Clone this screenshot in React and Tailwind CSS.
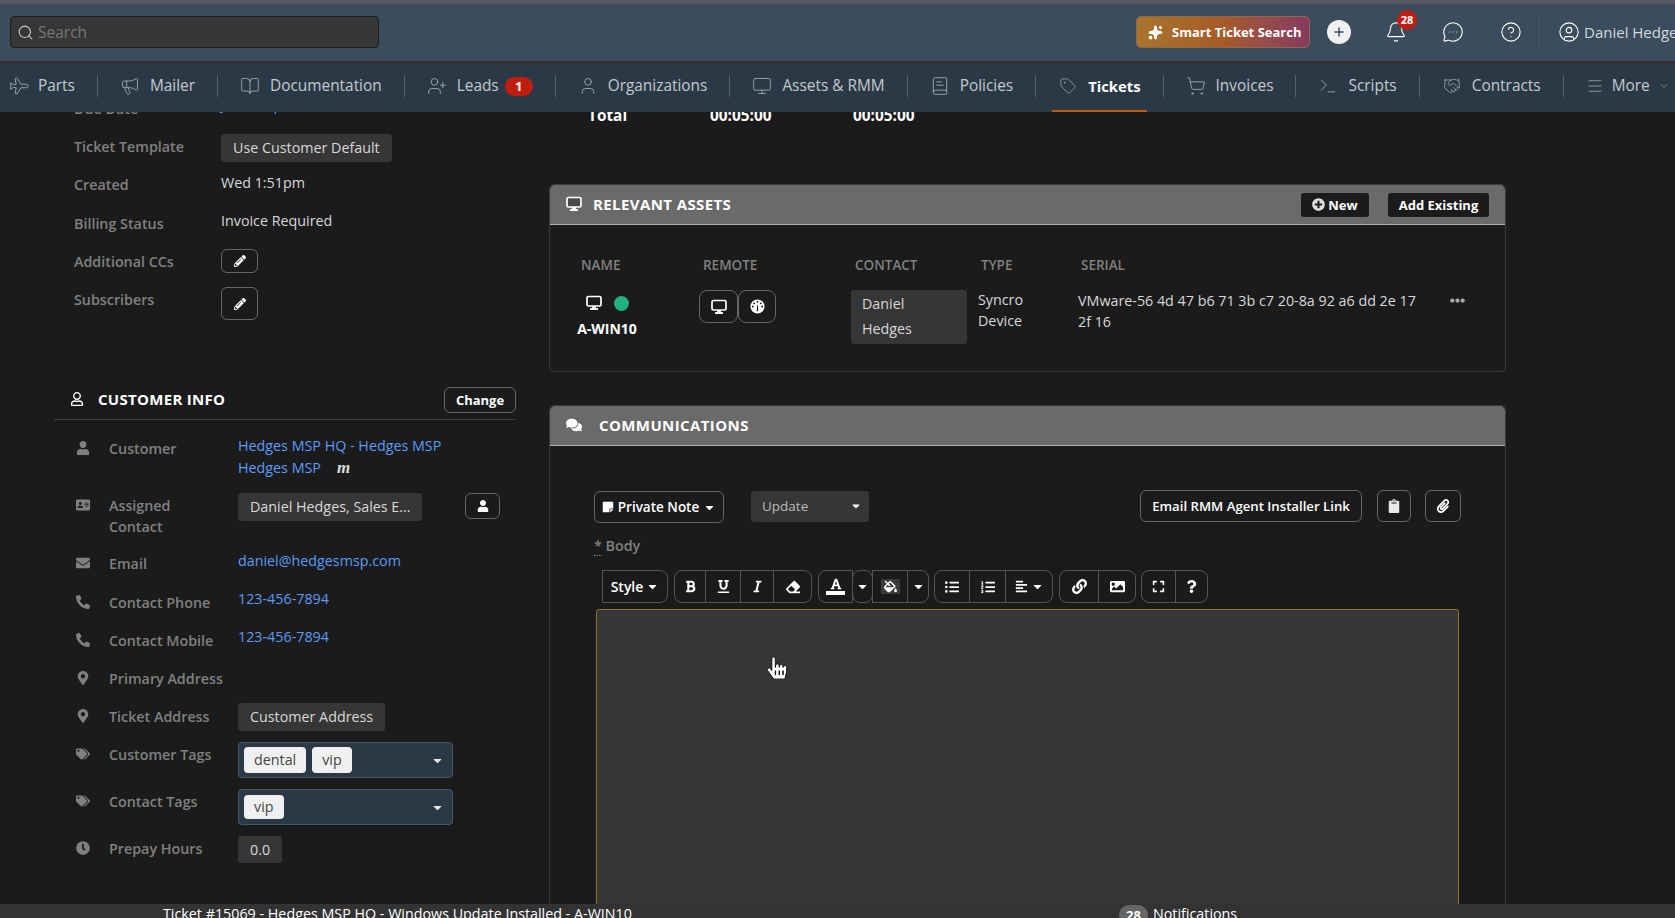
import React from 'react';
import {
  Plane, Megaphone, BookOpen, UserPlus, User, Monitor, BookText, Tag, ShoppingCart, Terminal, Handshake,
  Menu, ChevronDown, Bell, MessageCircleMore, CircleHelp, CircleUser, Search, Sparkles, Plus,
} from 'lucide-react';
import {
  FaUser, FaAddressCard, FaEnvelope, FaPhoneAlt, FaMapMarkerAlt, FaTags, FaClock, FaPencilAlt,
  FaComments, FaPlusCircle, FaBold, FaUnderline, FaItalic, FaEraser, FaFont, FaFillDrip, FaListUl, FaListOl,
  FaAlignLeft, FaLink, FaImage, FaExpand, FaQuestion, FaStickyNote, FaClipboard, FaPaperclip, FaEllipsisH,
  FaCaretDown, FaHandPointer, FaRegUser,
} from 'react-icons/fa';

const navItems = [
  { label: 'Parts', icon: Plane, iconClass: 'rotate-45' },
  { label: 'Mailer', icon: Megaphone },
  { label: 'Documentation', icon: BookOpen },
  { label: 'Leads', icon: UserPlus, badge: '1' },
  { label: 'Organizations', icon: User },
  { label: 'Assets & RMM', icon: Monitor },
  { label: 'Policies', icon: BookText },
  { label: 'Tickets', icon: Tag, iconClass: 'scale-85', active: true },
  { label: 'Invoices', icon: ShoppingCart },
  { label: 'Scripts', icon: Terminal },
  { label: 'Contracts', icon: Handshake, iconClass: 'scale-90' },
];

// solid monitor, the lucide one is too thin for the panel headers
const DesktopIcon = ({ size = 16, screen = 'none' }) => (
  <svg width={size} height={size} viewBox="0 0 16 16" className="shrink-0">
    <rect x="1" y="1.5" width="14" height="9.5" rx="1.5" fill={screen} stroke="white" strokeWidth="1.7" />
    <rect x="6.2" y="11" width="3.6" height="2.5" fill="white" />
    <rect x="4" y="13" width="8" height="2" rx="0.6" fill="white" />
  </svg>
);

const DialIcon = () => (
  <svg width="15" height="15" viewBox="0 0 16 16">
    <circle cx="8" cy="8" r="7.5" fill="white" />
    <g fill="#1b1b1b">
      <circle cx="8" cy="3" r="1" />
      <circle cx="4.4" cy="4.6" r="1" />
      <circle cx="11.6" cy="4.6" r="1" />
      <circle cx="3" cy="8" r="1" />
      <circle cx="13" cy="8" r="1" />
    </g>
    <path d="M7.2 13l.3-6h1l.3 6z" fill="#1b1b1b" />
  </svg>
);

const NavItem = ({ item }) => {
  const Icon = item.icon;
  return (
    <div className="relative flex h-full shrink-0 items-center pb-[4px]">
      <div className={`flex items-center gap-[10px] px-[22px] ${item.active ? 'text-[14.8px] font-bold text-white' : 'text-[#c4c9ce]'}`}>
        <Icon size={20} strokeWidth={1} className={`text-[#a9b0b7] ${item.iconClass || ''}`} />
        <span>{item.label}</span>
        {item.badge && (
          <span className="-ml-[4px] flex h-[19px] w-[28px] items-center justify-center rounded-full bg-[#bf1d10] text-[13px] font-bold text-white">
            {item.badge}
          </span>
        )}
      </div>
      <span className="h-[22px] w-px bg-[#55616d]" />
      {item.active && <span className="absolute bottom-0 left-[16px] h-[2px] w-[95px] bg-[#c2570c]" />}
    </div>
  );
};

const TopBar = () => (
  <header className="flex h-[57px] shrink-0 items-center bg-[#3b4d5c] pb-px pl-[10px]">
    <div className="flex h-[32px] w-[369px] shrink-0 items-center gap-[4px] rounded-[4px] border border-[#1f1f1f] bg-[#363636] pl-[6px] text-[15.5px] text-[#777]">
      <Search size={17} strokeWidth={1.5} className="text-[#c8c8c8]" />
      Search
    </div>
    <div className="ml-[757px] flex h-[32px] w-[174px] shrink-0 items-center gap-[9px] rounded-[5px] border border-[#8d6a4a] bg-gradient-to-r from-[#a8752d] via-[#a65b27] to-[#873a60] pl-[11px] text-[13px] font-bold text-white">
      <Sparkles size={15} fill="white" />
      Smart Ticket Search
    </div>
    <span className="ml-[17px] flex h-[24px] w-[24px] shrink-0 items-center justify-center rounded-full bg-[#f0f0f0]">
      <Plus size={14} strokeWidth={2.5} className="text-[#3b4d5c]" />
    </span>
    <div className="relative ml-[34px] shrink-0">
      <Bell size={22} strokeWidth={1.2} className="text-white" />
      <span className="absolute -right-[10px] -top-[11px] flex h-[20px] w-[20px] items-center justify-center rounded-full bg-[#bf1d10] text-[11px] font-bold text-white">
        28
      </span>
    </div>
    <MessageCircleMore size={22} strokeWidth={1.2} className="ml-[35px] shrink-0 text-white" />
    <CircleHelp size={22} strokeWidth={1.2} className="ml-[36px] shrink-0 text-white" />
    <span className="ml-[17px] h-[32px] w-px shrink-0 bg-[#46586a]" />
    <CircleUser size={22} strokeWidth={1.2} className="ml-[18px] shrink-0 text-white" />
    <span className="ml-[4px] whitespace-nowrap text-[15px] text-[#d4d8dc]">Daniel Hedges</span>
  </header>
);

const NavBar = () => (
  <nav className="h-[51px] shrink-0 overflow-hidden border-t-[3px] border-[#333] bg-[#2b3947] text-[15.4px]">
    <div className="-ml-[14px] flex h-full items-center">
      {navItems.map((item) => (
        <NavItem key={item.label} item={item} />
      ))}
      <div className="flex items-center gap-[8px] pb-[4px] pl-[22px] text-[#c4c9ce]">
        <Menu size={18} strokeWidth={1} className="text-[#a9b0b7]" />
        <span>More</span>
        <ChevronDown size={12} strokeWidth={1} />
      </div>
    </div>
  </nav>
);

const OutlineBtn = ({ className, children }) => (
  <span className={`flex items-center justify-center rounded-[6px] border border-[#666] text-white ${className}`}>
    {children}
  </span>
);

const TicketRow = ({ label, rowClass, valueClass, children }) => (
  <div className={`flex ${rowClass}`}>
    <span className="w-[147px] shrink-0 pt-[9px] font-semibold text-[#808080]">{label}</span>
    <div className={valueClass}>{children}</div>
  </div>
);

const GreyBox = ({ className, children }) => (
  <span className={`flex items-center rounded-[3px] bg-[#363636] text-[#d8d8d8] ${className}`}>{children}</span>
);

const TicketDetails = () => (
  <div className="-mt-[22px] pl-[74px]">
    <TicketRow label="Due Date" rowClass="h-[38px]" valueClass="pt-[5px] text-[#5a9cf5]">Jan 20 1pm</TicketRow>
    <TicketRow label="Ticket Template" rowClass="h-[38px]" valueClass="pt-[6px]">
      <GreyBox className="h-[28px] w-[171px] pl-[12px]">Use Customer Default</GreyBox>
    </TicketRow>
    <TicketRow label="Created" rowClass="h-[39px]" valueClass="pt-[7px] text-[#d8d8d8]">Wed 1:51pm</TicketRow>
    <TicketRow label="Billing Status" rowClass="h-[38px]" valueClass="pt-[6px] text-[#d8d8d8]">Invoice Required</TicketRow>
    <TicketRow label="Additional CCs" rowClass="h-[38px]" valueClass="pt-[6px]">
      <OutlineBtn className="h-[24px] w-[37px]"><FaPencilAlt size={12} /></OutlineBtn>
    </TicketRow>
    <TicketRow label="Subscribers" rowClass="h-[39px]" valueClass="pt-[6px]">
      <OutlineBtn className="h-[33px] w-[37px]"><FaPencilAlt size={12} /></OutlineBtn>
    </TicketRow>
  </div>
);

const InfoRow = ({ icon: Icon, label, rowClass, valueClass = 'pt-[3px]', children }) => (
  <div className={`flex ${rowClass}`}>
    <span className="flex w-[33px] shrink-0 justify-center pr-[19px] pt-[8px] text-[#808080]">
      <Icon size={14} className="shrink-0" />
    </span>
    <span className="w-[129px] shrink-0 pr-[12px] pt-[5px] font-semibold leading-[21px] text-[#808080]">{label}</span>
    <div className={valueClass}>{children}</div>
  </div>
);

const TagSelect = ({ tags, chipClass }) => (
  <div className="flex h-[36px] w-[215px] items-center justify-between rounded-[4px] border border-[#44586b] bg-[#2b3947] pl-[5px] pr-[8px]">
    <div className="flex gap-[6px]">
      {tags.map((t) => (
        <span key={t} className={`rounded-[4px] bg-[#f0f0f0] px-[10px] text-[#444] ${chipClass}`}>{t}</span>
      ))}
    </div>
    <FaCaretDown size={13} className="text-[#e8e8e8]" />
  </div>
);

const CustomerInfo = () => (
  <section className="ml-[54px] mt-[67px] w-[462px]">
    <div className="flex h-[33px] items-start justify-between border-b border-[#3d3d3d] pl-[16px]">
      <div className="flex items-center gap-[14px] pt-[2px] text-[15px] font-bold tracking-[0.3px] text-white">
        <FaRegUser size={14} />
        CUSTOMER INFO
      </div>
      <OutlineBtn className="h-[26px] w-[72px] rounded-[3px] text-[13px] font-bold">Change</OutlineBtn>
    </div>
    <div className="mt-[13px] pl-[22px]">
      <InfoRow icon={FaUser} label="Customer" rowClass="h-[57px]" valueClass="pt-[2px] leading-[22px] text-[#5a9cf5]">
        <div>Hedges MSP HQ - Hedges MSP</div>
        <div className="flex items-center gap-[16px]">
          Hedges MSP
          <span className="font-['Liberation_Serif',serif] text-[17px] font-bold italic text-[#ddd]">m</span>
        </div>
      </InfoRow>
      <InfoRow icon={FaAddressCard} label="Assigned Contact" rowClass="h-[58px]">
        <div className="flex items-start">
          <GreyBox className="h-[28px] w-[184px] pl-[12px]">Daniel Hedges, Sales E...</GreyBox>
          <OutlineBtn className="ml-[43px] h-[26px] w-[35px]"><FaUser size={12} /></OutlineBtn>
        </div>
      </InfoRow>
      <InfoRow icon={FaEnvelope} label="Email" rowClass="h-[39px]" valueClass="pt-[3px] text-[#5a9cf5]">daniel@hedgesmsp.com</InfoRow>
      <InfoRow icon={FaPhoneAlt} label="Contact Phone" rowClass="h-[38px]" valueClass="pt-[2px] text-[#5a9cf5]">123-456-7894</InfoRow>
      <InfoRow icon={FaPhoneAlt} label="Contact Mobile" rowClass="h-[38px]" valueClass="pt-[2px] text-[#5a9cf5]">123-456-7894</InfoRow>
      <InfoRow icon={FaMapMarkerAlt} label="Primary Address" rowClass="h-[38px]" />
      <InfoRow icon={FaMapMarkerAlt} label="Ticket Address" rowClass="h-[38px]" valueClass="pt-[2px]">
        <GreyBox className="h-[28px] w-[147px] pl-[12px]">Customer Address</GreyBox>
      </InfoRow>
      <InfoRow icon={FaTags} label="Customer Tags" rowClass="h-[47px]">
        <TagSelect tags={['dental', 'vip']} chipClass="py-[3px]" />
      </InfoRow>
      <InfoRow icon={FaTags} label="Contact Tags" rowClass="h-[47px]">
        <TagSelect tags={['vip']} chipClass="py-[2px]" />
      </InfoRow>
      <InfoRow icon={FaClock} label="Prepay Hours" rowClass="h-[47px]">
        <GreyBox className="h-[27px] w-[44px] pl-[12px]">0.0</GreyBox>
      </InfoRow>
    </div>
  </section>
);

const PanelHeader = ({ icon, iconGap, title, children }) => (
  <div className="flex h-[40px] shrink-0 items-center justify-between rounded-t-[5px] border-b border-[#b0b0b0] bg-[#6a6a6a] pl-[16px] pr-[16px]">
    <div className={`flex items-center pb-px text-[15px] font-bold tracking-[0.4px] text-white ${iconGap}`}>
      {icon}
      {title}
    </div>
    {children}
  </div>
);

const AssetsPanel = () => (
  <section className="mt-[58px] h-[188px] shrink-0 rounded-[5px] border border-[#3a3a3a]">
    <PanelHeader icon={<DesktopIcon screen="#4a4a4a" />} iconGap="gap-[11px]" title="RELEVANT ASSETS">
      <div className="flex gap-[19px] text-[13px] font-bold text-white">
        <span className="flex h-[24px] w-[68px] items-center justify-center gap-[3px] rounded-[3px] bg-[#1b1b1b]">
          <FaPlusCircle size={13} className="text-[#ddd]" />New
        </span>
        <span className="flex h-[24px] w-[101px] items-center justify-center rounded-[3px] bg-[#1b1b1b]">Add Existing</span>
      </div>
    </PanelHeader>
    <div className="grid grid-cols-[122px_152px_126px_100px_373px_auto] pl-[27px] pt-[30px]">
      {['NAME', 'REMOTE', 'CONTACT', 'TYPE', 'SERIAL', ''].map((h) => (
        <span key={h} className="h-[35px] pl-[4px] text-[13.5px] font-semibold text-[#808080]">{h}</span>
      ))}
      <div className="flex w-[60px] flex-col items-center">
        <div className="flex h-[26px] items-center gap-[12px] text-white">
          <DesktopIcon />
          <span className="h-[15px] w-[15px] rounded-full bg-[#21b07f]" />
        </div>
        <span className="mt-[3px] whitespace-nowrap text-[14px] font-bold text-white">A-WIN10</span>
      </div>
      <div className="flex items-start">
        <OutlineBtn className="h-[33px] w-[39px] rounded-[8px]"><DesktopIcon /></OutlineBtn>
        <OutlineBtn className="h-[33px] w-[38px] rounded-[8px]"><DialIcon /></OutlineBtn>
      </div>
      <div className="flex h-[54px] w-[116px] flex-col justify-center gap-[5px] rounded-[3px] bg-[#363636] pb-[2px] pl-[11px] text-[#d8d8d8]">
        <span>Daniel</span>
        <span>Hedges</span>
      </div>
      <div className="-mt-px pl-px pr-[30px] leading-[21px] text-[#d8d8d8]">Syncro Device</div>
      <div className="pl-px pr-[20px] leading-[21px] text-[#d8d8d8]">VMware-56 4d 47 b6 71 3b c7 20-8a 92 a6 dd 2e 17 2f 16</div>
      <div className="pt-[3px] text-[#aaa]"><FaEllipsisH size={15} /></div>
    </div>
  </section>
);

const toolShape = {
  both: 'rounded-[8px]',
  left: 'rounded-l-[8px]',
  right: 'rounded-r-[8px]',
  none: '',
};

const ToolGroup = ({ shape = 'both', className = '', items }) => (
  <div className={`flex h-[33px] divide-x divide-[#555] border border-[#555] ${toolShape[shape]} ${className}`}>
    {items.map(([width, content], i) => (
      <span key={i} className={`flex h-full items-center justify-center gap-[3px] text-white ${width}`}>{content}</span>
    ))}
  </div>
);

const caret = <FaCaretDown size={13} />;

const EditorToolbar = () => (
  <div className="ml-[8px] mt-[14px] flex">
    <ToolGroup shape="right" items={[['w-[64px]', <span className="flex items-center gap-[3px] text-[14px] font-semibold">Style{caret}</span>]]} />
    <ToolGroup className="ml-[6px]" items={[
      ['w-[31px]', <FaBold size={13} />], ['w-[35px]', <FaUnderline size={13} />],
      ['w-[33px]', <FaItalic size={13} />], ['w-[37px]', <FaEraser size={14} />],
    ]} />
    <ToolGroup shape="left" className="ml-[6px]" items={[[
      'w-[33px]',
      <span className="flex flex-col items-center gap-[1px]"><FaFont size={12} /><span className="h-[4px] w-[19px] bg-white" /></span>,
    ]]} />
    <ToolGroup className="-ml-px" items={[['w-[19px]', caret]]} />
    <ToolGroup shape="none" className="-ml-px" items={[[
      'w-[34px]',
      <span className="flex h-[15px] w-[19px] items-center justify-center bg-[#3a3a3a]"><FaFillDrip size={13} /></span>,
    ]]} />
    <ToolGroup shape="right" className="-ml-px" items={[['w-[20px]', caret]]} />
    <ToolGroup className="ml-[5px]" items={[
      ['w-[35px]', <FaListUl size={14} />], ['w-[36px]', <FaListOl size={14} />],
      ['w-[46px]', <>{<FaAlignLeft size={13} />}{caret}</>],
    ]} />
    <ToolGroup className="ml-[6px]" items={[['w-[39px]', <FaLink size={15} />], ['w-[36px]', <FaImage size={15} />]]} />
    <ToolGroup className="ml-[5px]" items={[['w-[34px]', <FaExpand size={13} />], ['w-[31px]', <FaQuestion size={13} />]]} />
  </div>
);

const CommunicationsPanel = () => (
  <section className="mt-[33px] min-h-0 flex-1 rounded-t-[5px] border border-b-0 border-[#3a3a3a]">
    <PanelHeader icon={<FaComments size={16} />} iconGap="gap-[17px]" title="COMMUNICATIONS" />
    <div className="pl-[44px] pt-[45px]">
      <div className="flex w-[867px] items-start">
        <OutlineBtn className="h-[32px] w-[130px] gap-[4px] text-[13.5px] font-semibold">
          <FaStickyNote size={12} />Private Note{caret}
        </OutlineBtn>
        <span className="ml-[27px] flex h-[31px] w-[118px] items-start justify-between rounded-[3px] bg-[#363636] pl-[11px] pr-[7px] pt-[5px] text-[13.5px] text-[#bbb]">
          Update<FaCaretDown size={12} className="mt-[4px] text-white" />
        </span>
        <OutlineBtn className="ml-auto -mt-px h-[32px] w-[222px] text-[13.2px] font-semibold">Email RMM Agent Installer Link</OutlineBtn>
        <OutlineBtn className="ml-[15px] -mt-px h-[32px] w-[34px]"><FaClipboard size={14} className="text-[#e8e8e8]" /></OutlineBtn>
        <OutlineBtn className="ml-[14px] -mt-px h-[32px] w-[36px]"><FaPaperclip size={14} /></OutlineBtn>
      </div>
      <div className="mt-[13px] font-semibold text-[#808080]">
        <span className="border-b border-dotted border-[#888]">*</span> Body
      </div>
      <EditorToolbar />
      <div className="relative ml-[2px] mt-[6px] h-[400px] w-[863px] rounded-[3px] border border-[#8a7a20] bg-[#363636]">
        <FaHandPointer size={22} className="absolute left-[169px] top-[47px] fill-white stroke-black stroke-[20]" />
      </div>
    </div>
  </section>
);

export default function App() {
  return (
    <div className="flex h-[918px] w-[1675px] flex-col overflow-hidden bg-[#1b1b1b] font-['Open_Sans',sans-serif] text-[14.3px] leading-[20px]">
      <div className="h-[4px] shrink-0 bg-[#55585c]" />
      <TopBar />
      <NavBar />
      <main className="flex min-h-0 flex-1 overflow-hidden">
        <aside className="w-[549px] shrink-0">
          <TicketDetails />
          <CustomerInfo />
        </aside>
        <div className="flex w-[957px] shrink-0 flex-col">
          <div className="-mt-[6px] flex h-[20px] shrink-0 text-[15.4px] font-bold text-white">
            <span className="ml-[39px] w-[122px]">Total</span>
            <span className="w-[143px]">00:05:00</span>
            <span>00:05:00</span>
          </div>
          <AssetsPanel />
          <CommunicationsPanel />
        </div>
      </main>
      <footer className="flex h-[14px] shrink-0 overflow-hidden bg-[#333] pl-[163px] text-white">
        <span className="w-[956px]">Ticket #15069 - Hedges MSP HQ - Windows Update Installed - A-WIN10</span>
        <span className="flex items-start gap-[5px]">
          <span className="mt-[1px] flex h-[20px] w-[29px] items-start justify-center rounded-full bg-[#666] text-[13px] font-bold">28</span>
          Notifications
        </span>
      </footer>
    </div>
  );
}
